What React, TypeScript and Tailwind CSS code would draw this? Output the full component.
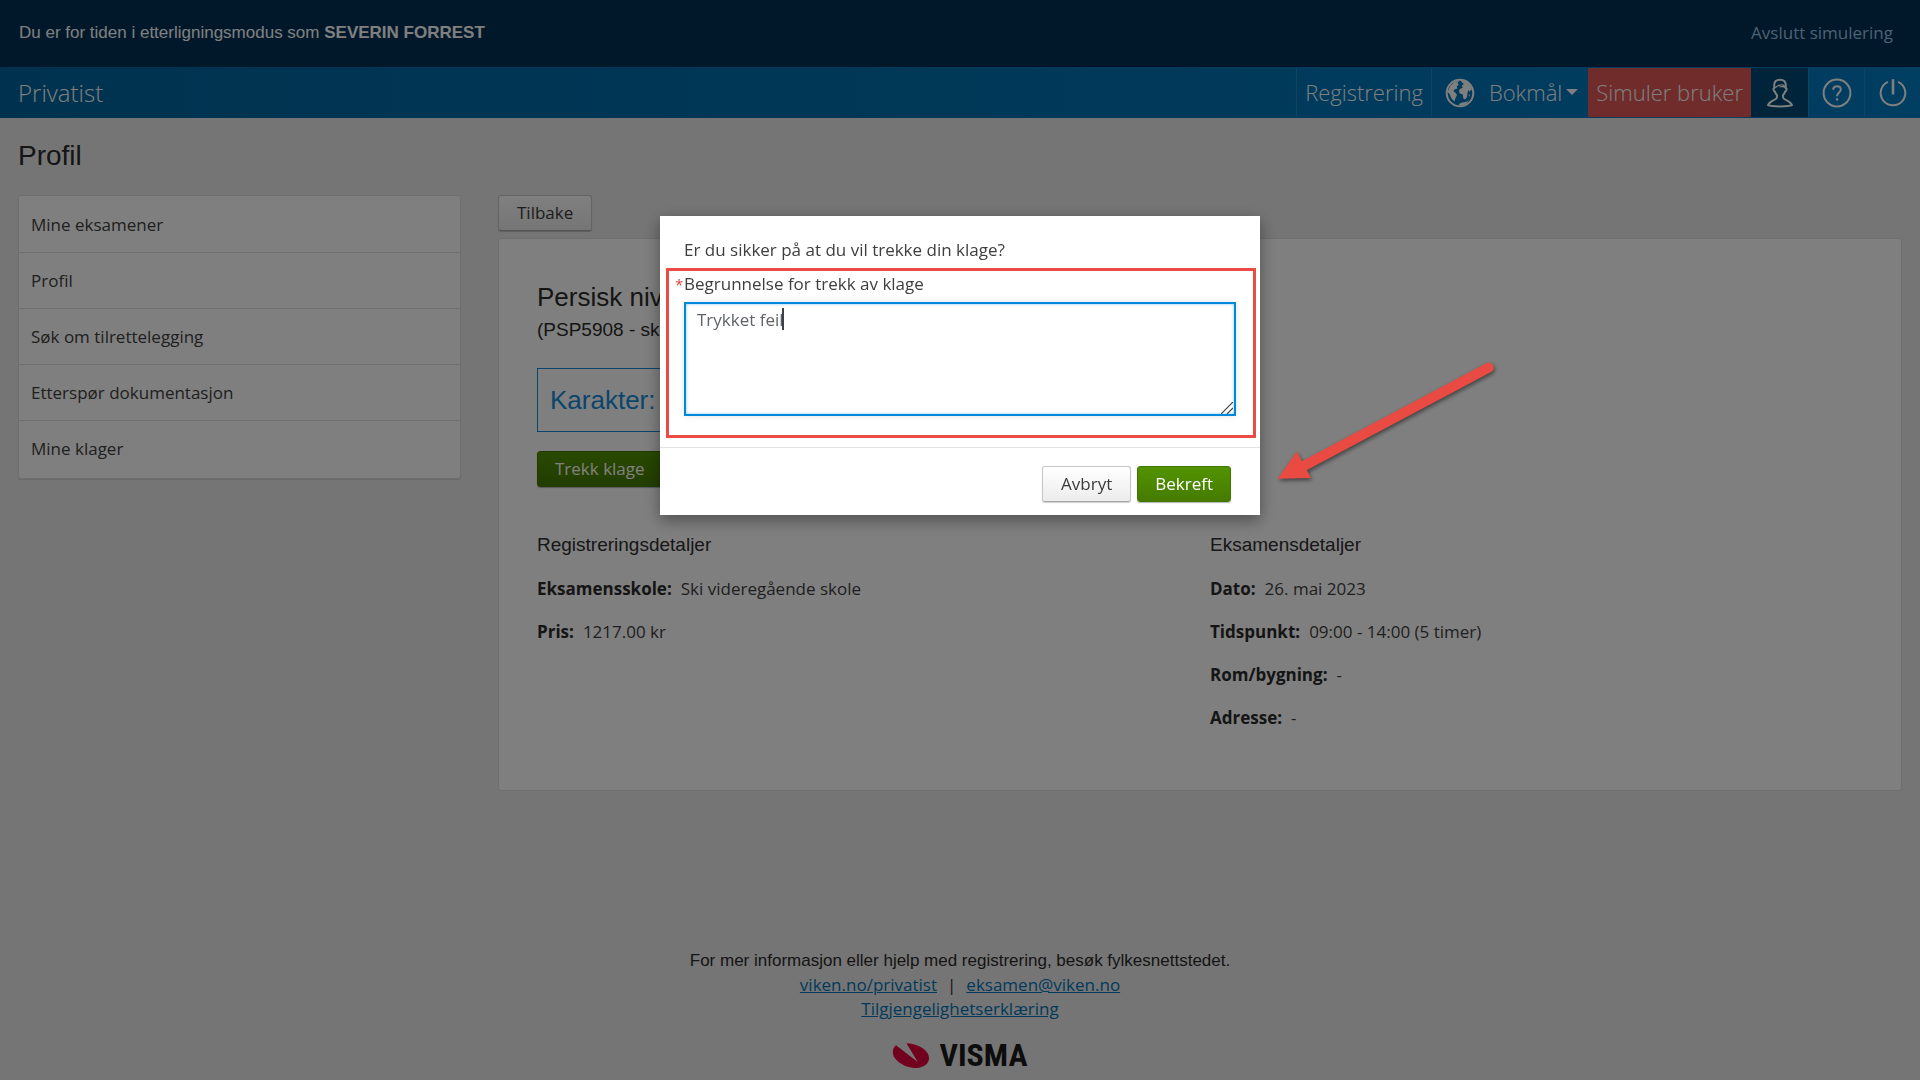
import type { ReactNode } from 'react';

const menu = ['Mine eksamener', 'Profil', 'Søk om tilrettelegging', 'Etterspør dokumentasjon', 'Mine klager'];

const registration: [string, string][] = [
  ['Eksamensskole:', 'Ski videregående skole'],
  ['Pris:', '1217.00 kr'],
];

const exam: [string, string][] = [
  ['Dato:', '26. mai 2023'],
  ['Tidspunkt:', '09:00 - 14:00 (5 timer)'],
  ['Rom/bygning:', '-'],
  ['Adresse:', '-'],
];

const sans = "font-['Liberation_Sans',Arial,sans-serif]";

function GlobeIcon() {
  return (
    <svg viewBox="0 0 30 30" className="size-[30px]" fill="currentColor" aria-hidden="true">
      <circle cx="15" cy="15" r="13.3" fill="none" stroke="currentColor" strokeWidth="2" />
      <path d="M5.5 7.5 L10 3.5 L14 3 L12.5 5 L13.8 6.5 L11.8 8.5 L12.3 10.5 L9.8 11.3 L8.3 13.2 L10.5 14.8 L12 17 L10.5 20 L9.5 23.5 L6.5 20.5 L4.5 16 L2.5 14 Z" />
      <path d="M15.5 2.2 C21 2.5 26 6.5 27.3 12.5 L25.8 11.5 L25 14 L23.6 12 L22.5 14.5 L22 19 L20 21.5 L18.3 20.5 L17.8 16.5 L14.5 15.3 L14 12 L16.2 10.2 L18 9.5 L16.5 7.8 L19 6 L17 4.5 Z" />
      <path d="M13.5 26.3 L17 24.5 L21.5 23.8 L24 22 L21 26.2 L16 27.8 Z" />
      <path d="M23.5 17 L25 16 L24.6 18.5 Z" />
    </svg>
  );
}

function PersonIcon() {
  return (
    <svg viewBox="0 0 28 30" className="h-[30px] w-[28px]" fill="none" stroke="currentColor" strokeWidth="2" strokeLinejoin="round" aria-hidden="true">
      <path d="M14 1.8 C10.5 1.8 8.3 3.8 8.2 7 L8.3 10 C7 10.3 7.3 12.8 8.8 13.4 C9.4 15.4 10.3 16.4 11 17.2 L10.8 19.8 C9.5 22.6 3.5 22.6 2 27.2 C5.5 28.8 22.5 28.8 26 27.2 C24.5 22.6 18.5 22.6 17.2 19.8 L17 17.2 C17.7 16.4 18.6 15.4 19.2 13.4 C20.7 12.8 21 10.3 19.7 10 L19.8 7 C19.7 3.8 17.5 1.8 14 1.8 Z" />
      <path d="M9 9.6 C11 8.8 12 7.2 14 7.2 C16 6 18.4 7.4 19 9.4 C17 7.8 15.5 9.2 13.6 8.6" strokeWidth="1.2" />
    </svg>
  );
}

function HelpIcon() {
  return (
    <svg viewBox="0 0 30 30" className="size-[30px]" fill="none" stroke="currentColor" strokeWidth="2" aria-hidden="true">
      <circle cx="15" cy="15" r="13.4" />
      <path d="M11.2 11.8 C11.2 9.4 12.8 8.2 15 8.2 C17.3 8.2 18.8 9.6 18.8 11.6 C18.8 14.6 15.1 14.6 15.1 18.2" />
      <path d="M15.1 20.3 V22.5" strokeWidth="2.2" />
    </svg>
  );
}

function PowerIcon() {
  return (
    <svg viewBox="0 0 30 30" className="size-[30px]" fill="none" stroke="currentColor" strokeWidth="2" aria-hidden="true">
      <path d="M10 3.8 A12.3 12.3 0 1 0 20 3.8" />
      <path d="M15 1.2 V16.5" strokeWidth="2.6" />
    </svg>
  );
}

function Details({ title, rows }: { title: string; rows: [string, string][] }) {
  return (
    <section>
      <h3 className={`${sans} text-[19px] leading-6 text-[#2e2e2e]`}>{title}</h3>
      <dl className="mt-5 grid gap-[19px]">
        {rows.map(([label, value]) => (
          <div key={label} className="flex gap-[9px] leading-6">
            <dt className="font-bold text-[#2b2b2b]">{label}</dt>
            <dd>{value}</dd>
          </div>
        ))}
      </dl>
    </section>
  );
}

function Button({ primary, children }: { primary?: boolean; children: ReactNode }) {
  return (
    <button
      type="button"
      className={
        primary
          ? 'h-9 rounded-[3px] border border-[#427600] bg-linear-to-b from-[#529300] to-[#457b00] px-[17px] text-[17px] font-medium text-white shadow-[0_1px_1px_rgba(0,0,0,0.3)]'
          : 'h-9 rounded-[3px] border border-[#c6c6c6] border-b-[#a8a8a8] bg-linear-to-b from-white to-[#ececec] px-[18px] text-[17px] text-[#3a3a3a] shadow-[0_1px_1px_rgba(0,0,0,0.2)]'
      }
    >
      {children}
    </button>
  );
}

export default function App() {
  return (
    <div className="flex min-h-screen flex-col bg-[#ebebeb] font-['Open_Sans',sans-serif] text-[17px] text-[#3e3e3e]">
      <div className="flex h-[67px] items-center justify-between bg-[#003054] pr-[27px] pb-[2px] pl-[19px]">
        <p className={`${sans} text-[17px] text-white`}>
          Du er for tiden i etterligningsmodus som <strong>SEVERIN FORREST</strong>
        </p>
        <a href="#avslutt" className="text-[#99c4e4]">Avslutt simulering</a>
      </div>

      <header className="flex h-[51px] items-center justify-between bg-linear-to-r from-[#00659e] to-[#007cc4] pl-[18px] text-[22px] font-light text-white">
        <a href="#privatist" className="text-2xl font-light">Privatist</a>
        <nav className="flex h-[49px] items-stretch">
          <a href="#registrering" className="flex items-center border-l border-[#1f86c1] px-2">Registrering</a>
          <button type="button" className="flex items-center border-l border-[#1f86c1] pr-[10px] pl-[13px]">
            <GlobeIcon />
            <span className="ml-[14px]">Bokmål</span>
            <svg viewBox="0 0 12 6" className="mb-[2px] ml-1 h-[6px] w-3" fill="currentColor" aria-hidden="true">
              <path d="M0 0 H12 L6 6 Z" />
            </svg>
          </button>
          <a href="#simuler" className="flex items-center bg-[#de5957] px-2">Simuler bruker</a>
          <button type="button" aria-label="Profil" className="flex w-[57px] items-center justify-center bg-[#004a75]"><PersonIcon /></button>
          <button type="button" aria-label="Hjelp" className="flex w-[56px] items-center justify-center border-l border-[#1f86c1]"><HelpIcon /></button>
          <button type="button" aria-label="Logg ut" className="flex w-[56px] items-center justify-center border-l border-[#1f86c1]"><PowerIcon /></button>
        </nav>
      </header>

      <main className="px-[18px] pt-[22px]">
        <h1 className={`${sans} text-[28px] leading-8 text-[#2b2b2b]`}>Profil</h1>
        <div className="mt-[23px] flex items-start gap-[37px]">
          <ul className="grid w-[443px] shrink-0 divide-y divide-[#dcdcdc] rounded-[3px] border border-[#dedede] bg-white pt-px pb-[2px] shadow-[0_1px_1px_rgba(0,0,0,0.12)]">
            {menu.map((item) => (
              <li key={item}>
                <a href="#meny" className="block px-3 py-4 leading-[23px]">{item}</a>
              </li>
            ))}
          </ul>

          <div className="min-w-0 flex-1">
            <Button>Tilbake</Button>
            <article className="mt-[7px] min-h-[553px] rounded-[3px] border border-[#dedede] bg-white px-[38px] pt-[42px] pb-10">
              <h2 className={`${sans} text-[26px] leading-8 text-[#2b2b2b]`}>Persisk nivå</h2>
              <p className={`${sans} mt-px text-[19px] leading-8 text-[#2b2b2b]`}>(PSP5908 - skriftlig)</p>
              <p className={`${sans} mt-[22px] mb-[19px] w-[180px] border border-[#168ad6] px-3 py-[15px] text-[26px] leading-8 text-[#168ad6]`}>Karakter: 2</p>
              <Button primary>Trekk klage</Button>
              <div className="mt-[46px] grid grid-cols-2 gap-5">
                <Details title="Registreringsdetaljer" rows={registration} />
                <Details title="Eksamensdetaljer" rows={exam} />
              </div>
            </article>
          </div>
        </div>
      </main>

      <footer className="mt-auto flex flex-col items-center pb-[9px] leading-6">
        <p className={`${sans} text-[#2b2b2b]`}>For mer informasjon eller hjelp med registrering, besøk fylkesnettstedet.</p>
        <p className="text-[#2b2b2b]">
          <a href="#viken" className="text-[#0075b8] underline">viken.no/privatist</a>
          <span className="mx-[10px]">|</span>
          <a href="#epost" className="text-[#0075b8] underline">eksamen@viken.no</a>
        </p>
        <a href="#tilgjengelighet" className="text-[#0075b8] underline">Tilgjengelighetserklæring</a>
        <div className="mt-[18px] flex items-center gap-[10px]">
          <svg viewBox="0 0 37 25" className="h-[25px] w-[37px]" fill="#e4003f" aria-hidden="true">
            <path d="M4 2.2 C-0.5 6 -0.4 12.5 5 17.6 C11 23.4 20 26.3 28 24.4 C35.5 22.6 38.8 17 36 11 C33 5 24 0.3 14.4 0.2 L25.8 19 Z" />
          </svg>
          <span className="font-['Roboto_Condensed',Roboto,sans-serif] text-[32px] leading-8 font-bold text-[#1c1a1b]">VISMA</span>
        </div>
      </footer>

      <div className="fixed inset-0 flex items-start justify-center bg-black/50 pt-[216px]">
        <div role="dialog" aria-modal="true" aria-label="Trekk klage" className="relative w-[600px] bg-white shadow-[0_5px_15px_rgba(0,0,0,0.4)]">
          <p className="px-6 pt-[22px] leading-6">Er du sikker på at du vil trekke din klage?</p>
          <div className="mt-[6px] mr-1 mb-[9px] ml-[6px] border-[3px] border-[#ea4b45] pt-px pr-[17px] pb-[19px] pl-[6px]">
            <label htmlFor="reason" className="flex leading-6">
              <span className="w-[9px] text-[15px] text-[#e0403c]">*</span>
              Begrunnelse for trekk av klage
            </label>
            <div className="relative mt-[6px] ml-[9px]">
              <textarea
                id="reason"
                rows={4}
                defaultValue="Trykket feil"
                className="block h-[114px] w-full resize-none border-2 border-[#0089dc] bg-white px-[11px] py-1 leading-6 text-[#606468] shadow-[inset_0_0_3px_rgba(0,137,220,0.5),0_0_6px_rgba(0,0,0,0.12)] outline-none"
              />
              <span className="absolute top-[6px] left-[98px] h-[22px] w-[2px] bg-[#3c4248]" />
              <svg viewBox="0 0 12 12" className="absolute right-[3px] bottom-[2px] size-3" stroke="#444444" strokeWidth="1.2" aria-hidden="true">
                <path d="M0 12 L12 0 M6 12 L12 6" />
              </svg>
            </div>
          </div>
          <div className="flex justify-end gap-[6px] border-t border-[#e2e2e2] pt-[18px] pr-[29px] pb-[13px]">
            <Button>Avbryt</Button>
            <Button primary>Bekreft</Button>
          </div>
          <svg viewBox="0 0 280 160" className="absolute top-[124px] left-[580px] h-[160px] w-[280px] drop-shadow-[1px_2px_2px_rgba(0,0,0,0.5)]" aria-hidden="true">
            <path d="M60 128 L248.7 27.7" stroke="#e94b43" strokeWidth="10" strokeLinecap="round" />
            <path d="M37.7 138.7 L56.8 111.6 L71 138 Z" fill="#e94b43" />
          </svg>
        </div>
      </div>
    </div>
  );
}
